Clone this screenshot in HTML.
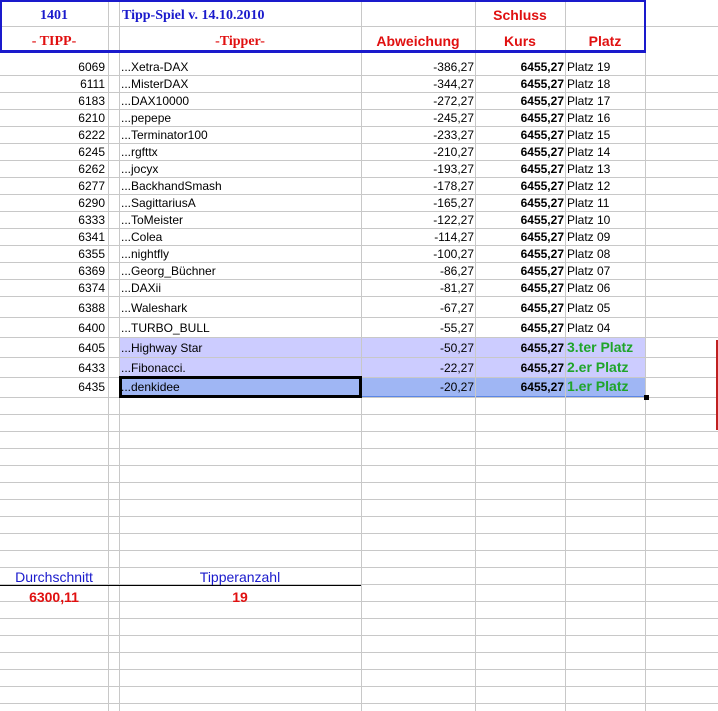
<!DOCTYPE html>
<html><head><meta charset="utf-8"><style>
body{margin:0;width:718px;height:711px;overflow:hidden;background:#fff;position:relative;font-family:"Liberation Sans",Arial,sans-serif;}
.h{position:absolute;left:0;width:718px;height:1px;background:#c8c8c8}
.v{position:absolute;top:0;height:711px;width:1px;background:#c8c8c8}
.t{position:absolute;font-size:12px;line-height:14px;white-space:nowrap;color:#000}
.r{text-align:right}
.c{text-align:center}
</style></head><body>
<div style="position:absolute;left:119px;top:337px;width:526px;height:40px;background:#ccccff"></div>
<div style="position:absolute;left:119px;top:377px;width:525px;height:19px;background:#9fb6f4;border:1px solid #5b86e6;border-top:none"></div>
<script>
var s='';
var hl=[26,75];for(var y=92;y<=296;y+=17)hl.push(y);hl=hl.concat([317,337,357,377,397]);for(var y=414;y<711;y+=17)hl.push(y);
hl.forEach(function(y){s+='<div class="h" style="top:'+y+'px"></div>'});
[108,119,361,475,565,645].forEach(function(x){s+='<div class="v" style="left:'+x+'px"></div>'});
var d=[["6069","Xetra-DAX","-386,27","Platz 19"],["6111","MisterDAX","-344,27","Platz 18"],["6183","DAX10000","-272,27","Platz 17"],["6210","pepepe","-245,27","Platz 16"],["6222","Terminator100","-233,27","Platz 15"],["6245","rgfttx","-210,27","Platz 14"],["6262","jocyx","-193,27","Platz 13"],["6277","BackhandSmash","-178,27","Platz 12"],["6290","SagittariusA","-165,27","Platz 11"],["6333","ToMeister","-122,27","Platz 10"],["6341","Colea","-114,27","Platz 09"],["6355","nightfly","-100,27","Platz 08"],["6369","Georg_Büchner","-86,27","Platz 07"],["6374","DAXii","-81,27","Platz 06"],["6388","Waleshark","-67,27","Platz 05"],["6400","TURBO_BULL","-55,27","Platz 04"],["6405","Highway Star","-50,27","3.ter Platz"],["6433","Fibonacci.","-22,27","2.er Platz"],["6435","denkidee","-20,27","1.er Platz"]];
var cy=[67,84,101,118,135,152,169,186,203,220,237,254,271,288,308,328,348,368,387];
d.forEach(function(r,i){var t=cy[i]-7;
s+='<div class="t r" style="left:0;width:105px;top:'+t+'px">'+r[0]+'</div>';
s+='<div class="t" style="left:121px;top:'+t+'px">...'+r[1]+'</div>';
s+='<div class="t r" style="left:361px;width:113px;top:'+t+'px">'+r[2]+'</div>';
s+='<div class="t r" style="left:475px;width:89px;top:'+t+'px;font-weight:bold">6455,27</div>';
if(i<16)s+='<div class="t" style="left:567px;top:'+t+'px">'+r[3]+'</div>';
else s+='<div class="t" style="left:567px;top:'+(t-2)+'px;font-weight:bold;font-size:14px;line-height:16px;color:#1fa52a">'+r[3]+'</div>';
});
document.write(s);
</script>
<div style="position:absolute;left:0;top:0;width:642px;height:48px;border:2px solid #1a1acc;border-bottom-width:3px;background:transparent"></div>
<div class="t c" style="left:0;width:108px;top:8px;font-family:'Liberation Serif',serif;font-weight:bold;font-size:14px;line-height:16px;color:#1a1acc">1401</div>
<div class="t" style="left:122px;top:8px;font-family:'Liberation Serif',serif;font-weight:bold;font-size:14px;line-height:16px;color:#1a1acc">Tipp-Spiel v. 14.10.2010</div>
<div class="t c" style="left:0;width:108px;top:34px;font-family:'Liberation Serif',serif;font-weight:bold;font-size:14px;line-height:16px;color:#e01010">- TIPP-</div>
<div class="t c" style="left:119px;width:242px;top:34px;font-family:'Liberation Serif',serif;font-weight:bold;font-size:14px;line-height:16px;color:#e01010">-Tipper-</div>
<div class="t c" style="left:361px;width:114px;top:33px;font-weight:bold;font-size:14px;line-height:16px;color:#e01010">Abweichung</div>
<div class="t c" style="left:475px;width:90px;top:7px;font-weight:bold;font-size:14px;line-height:16px;color:#e01010">Schluss</div>
<div class="t c" style="left:475px;width:90px;top:33px;font-weight:bold;font-size:14px;line-height:16px;color:#e01010">Kurs</div>
<div class="t c" style="left:565px;width:80px;top:33px;font-weight:bold;font-size:14px;line-height:16px;color:#e01010">Platz</div>
<div style="position:absolute;left:119px;top:376px;width:237px;height:16px;border:3px solid #000"></div>
<div style="position:absolute;left:644px;top:395px;width:5px;height:5px;background:#000"></div>
<div style="position:absolute;left:716px;top:340px;width:2px;height:90px;background:#c02020"></div>
<div style="position:absolute;left:0;top:585px;width:361px;height:1px;background:#000"></div>
<div class="t c" style="left:0;width:108px;top:569px;font-size:14px;line-height:16px;color:#1a1acc">Durchschnitt</div>
<div class="t c" style="left:119px;width:242px;top:569px;font-size:14px;line-height:16px;color:#1a1acc">Tipperanzahl</div>
<div class="t c" style="left:0;width:108px;top:589px;font-weight:bold;font-size:14px;line-height:16px;color:#e01010">6300,11</div>
<div class="t c" style="left:119px;width:242px;top:589px;font-weight:bold;font-size:14px;line-height:16px;color:#e01010">19</div>
</body></html>
